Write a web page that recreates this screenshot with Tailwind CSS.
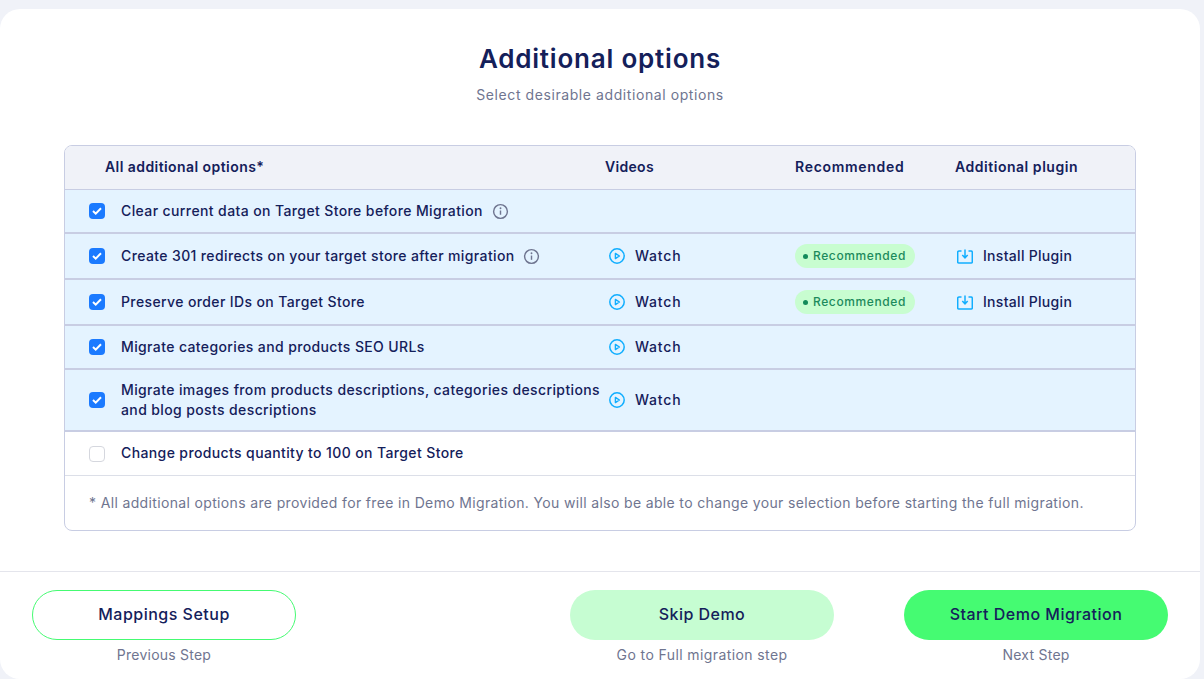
<!DOCTYPE html>
<html lang="en">
<head>
  <meta charset="UTF-8" />
  <title>Additional options</title>
  <script src="https://cdn.jsdelivr.net/npm/@tailwindcss/browser@4"></script>
</head>
<body class="h-[679px] overflow-hidden bg-[#f0f2f8] font-['Inter',sans-serif] text-[#14205a]">
  <div class="mt-[9px] mr-[4px] h-[670px] rounded-[20px] bg-white">
    <div class="pt-[32px] text-center">
      <h1 class="text-[26px] leading-[36px] font-semibold tracking-[0.8px]">Additional options</h1>
      <p class="mt-[8px] text-[14px] leading-[20px] tracking-[0.58px] text-[#6f7590]">Select desirable additional options</p>
    </div>

    <div class="mx-[64px] mt-[40px] h-[386px] overflow-hidden rounded-[8px] border border-[#c8cde3]">
      <div class="flex h-[44px] items-center border-b border-[#c8cde3] bg-[#f0f2f8] pb-[2px] text-[14px] font-semibold tracking-[0.43px]">
        <div class="w-[540px] pl-[40px]">All additional options*</div>
        <div class="w-[190px] tracking-[0.3px]">Videos</div>
        <div class="w-[160px] tracking-[0.7px]">Recommended</div>
        <div class="tracking-[0.53px]">Additional plugin</div>
      </div>

      <div class="flex h-[44px] items-center border-b-2 border-[#c8cde3] bg-[#e4f3ff] text-[14px] font-medium tracking-[0.39px]">
        <div class="flex w-[540px] items-center gap-[16px] pl-[24px]">
          <span class="flex h-[16px] w-[16px] items-center justify-center rounded-[4px] bg-[#1b7aff]"><svg width="10" height="8" viewBox="0 0 10 8" fill="none"><path d="M1 4l2.7 2.6L9 1.2" stroke="#fff" stroke-width="2"/></svg></span>
          <span class="pb-[2px]">Clear current data on Target Store before Migration</span>
          <svg class="-ml-[7px]" width="17" height="17" viewBox="0 0 18 18" fill="none"><circle cx="9" cy="9" r="7.3" stroke="#6f7590" stroke-width="1.5"/><path d="M9 8v4.500" stroke="#6f7590" stroke-width="1.5"/><circle cx="9" cy="5.600" r="1" fill="#6f7590"/></svg>
        </div>
      </div>

      <div class="flex h-[46px] items-center border-b-2 border-[#c8cde3] bg-[#e4f3ff] text-[14px] font-medium tracking-[0.38px]">
        <div class="flex w-[540px] items-center gap-[16px] pl-[24px]">
          <span class="flex h-[16px] w-[16px] items-center justify-center rounded-[4px] bg-[#1b7aff]"><svg width="10" height="8" viewBox="0 0 10 8" fill="none"><path d="M1 4l2.7 2.6L9 1.2" stroke="#fff" stroke-width="2"/></svg></span>
          <span class="pb-[2px]">Create 301 redirects on your target store after migration</span>
          <svg class="-ml-[8px]" width="17" height="17" viewBox="0 0 18 18" fill="none"><circle cx="9" cy="9" r="7.3" stroke="#6f7590" stroke-width="1.5"/><path d="M9 8v4.500" stroke="#6f7590" stroke-width="1.5"/><circle cx="9" cy="5.600" r="1" fill="#6f7590"/></svg>
        </div>
        <div class="flex w-[190px] items-center gap-[10px] pl-[4px]">
          <svg width="16" height="16" viewBox="0 0 16 16" fill="none"><circle cx="8" cy="8" r="7.2" stroke="#10aeff" stroke-width="1.5"/><path d="M6.4 5.4l4 2.6-4 2.6z" stroke="#10aeff" stroke-width="1.4" stroke-linejoin="round"/></svg>
          <span class="pb-[2px] tracking-[0.8px]">Watch</span>
        </div>
        <div class="flex w-[160px] items-center">
          <span class="inline-flex h-[24px] w-[120px] items-center gap-[5px] rounded-full bg-[#c8fdd0] pl-[8px] text-[12px] tracking-[0.6px] text-[#1c8a5c]"><span class="h-[5px] w-[5px] rounded-full bg-[#138a5a]"></span>Recommended</span>
        </div>
        <div class="flex items-center gap-[10px] pl-[2px]">
          <svg width="16" height="15" viewBox="0 0 16 15" fill="none"><path d="M4.500 2H2A1.300 1.300 0 0 0 .7 3.300v9.500A1.300 1.300 0 0 0 2 14.100h12a1.300 1.300 0 0 0 1.300-1.300V3.300A1.300 1.300 0 0 0 14 2h-2.500" stroke="#10aeff" stroke-width="1.5"/><path d="M8 .5v8M5.300 6L8 8.800 10.700 6" stroke="#10aeff" stroke-width="1.5"/></svg>
          <span class="pb-[2px] tracking-[0.3px]">Install Plugin</span>
        </div>
      </div>

      <div class="flex h-[46px] items-center border-b-2 border-[#c8cde3] bg-[#e4f3ff] text-[14px] font-medium tracking-[0.38px]">
        <div class="flex w-[540px] items-center gap-[16px] pl-[24px]">
          <span class="flex h-[16px] w-[16px] items-center justify-center rounded-[4px] bg-[#1b7aff]"><svg width="10" height="8" viewBox="0 0 10 8" fill="none"><path d="M1 4l2.7 2.6L9 1.2" stroke="#fff" stroke-width="2"/></svg></span>
          <span class="pb-[2px]">Preserve order IDs on Target Store</span>
        </div>
        <div class="flex w-[190px] items-center gap-[10px] pl-[4px]">
          <svg width="16" height="16" viewBox="0 0 16 16" fill="none"><circle cx="8" cy="8" r="7.2" stroke="#10aeff" stroke-width="1.5"/><path d="M6.4 5.4l4 2.6-4 2.6z" stroke="#10aeff" stroke-width="1.4" stroke-linejoin="round"/></svg>
          <span class="pb-[2px] tracking-[0.8px]">Watch</span>
        </div>
        <div class="flex w-[160px] items-center">
          <span class="inline-flex h-[24px] w-[120px] items-center gap-[5px] rounded-full bg-[#c8fdd0] pl-[8px] text-[12px] tracking-[0.6px] text-[#1c8a5c]"><span class="h-[5px] w-[5px] rounded-full bg-[#138a5a]"></span>Recommended</span>
        </div>
        <div class="flex items-center gap-[10px] pl-[2px]">
          <svg width="16" height="15" viewBox="0 0 16 15" fill="none"><path d="M4.500 2H2A1.300 1.300 0 0 0 .7 3.300v9.500A1.300 1.300 0 0 0 2 14.100h12a1.300 1.300 0 0 0 1.300-1.300V3.300A1.300 1.300 0 0 0 14 2h-2.500" stroke="#10aeff" stroke-width="1.5"/><path d="M8 .5v8M5.300 6L8 8.800 10.700 6" stroke="#10aeff" stroke-width="1.5"/></svg>
          <span class="pb-[2px] tracking-[0.3px]">Install Plugin</span>
        </div>
      </div>

      <div class="flex h-[44px] items-center border-b-2 border-[#c8cde3] bg-[#e4f3ff] text-[14px] font-medium tracking-[0.38px]">
        <div class="flex w-[540px] items-center gap-[16px] pl-[24px]">
          <span class="flex h-[16px] w-[16px] items-center justify-center rounded-[4px] bg-[#1b7aff]"><svg width="10" height="8" viewBox="0 0 10 8" fill="none"><path d="M1 4l2.7 2.6L9 1.2" stroke="#fff" stroke-width="2"/></svg></span>
          <span class="pb-[1px]">Migrate categories and products SEO URLs</span>
        </div>
        <div class="flex w-[190px] items-center gap-[10px] pl-[4px]">
          <svg width="16" height="16" viewBox="0 0 16 16" fill="none"><circle cx="8" cy="8" r="7.2" stroke="#10aeff" stroke-width="1.5"/><path d="M6.4 5.4l4 2.6-4 2.6z" stroke="#10aeff" stroke-width="1.4" stroke-linejoin="round"/></svg>
          <span class="pb-[2px] tracking-[0.8px]">Watch</span>
        </div>
      </div>

      <div class="flex h-[62px] items-center border-b-2 border-[#c8cde3] bg-[#e4f3ff] text-[14px] font-medium tracking-[0.38px]">
        <div class="flex w-[540px] items-center gap-[16px] pl-[24px]">
          <span class="flex h-[16px] w-[16px] shrink-0 items-center justify-center rounded-[4px] bg-[#1b7aff]"><svg width="10" height="8" viewBox="0 0 10 8" fill="none"><path d="M1 4l2.7 2.6L9 1.2" stroke="#fff" stroke-width="2"/></svg></span>
          <span class="leading-[20px]">Migrate images from products descriptions, categories descriptions and blog posts descriptions</span>
        </div>
        <div class="flex w-[190px] items-center gap-[10px] pl-[4px]">
          <svg width="16" height="16" viewBox="0 0 16 16" fill="none"><circle cx="8" cy="8" r="7.2" stroke="#10aeff" stroke-width="1.5"/><path d="M6.4 5.4l4 2.6-4 2.6z" stroke="#10aeff" stroke-width="1.4" stroke-linejoin="round"/></svg>
          <span class="pb-[2px] tracking-[0.8px]">Watch</span>
        </div>
      </div>

      <div class="flex h-[44px] items-center border-b border-[#dcdfe8] text-[14px] font-medium tracking-[0.38px]">
        <div class="flex w-[540px] items-center gap-[16px] pl-[24px]">
          <span class="h-[16px] w-[16px] rounded-[4px] border border-[#d5d7de]"></span>
          <span class="pb-[2px]">Change products quantity to 100 on Target Store</span>
        </div>
      </div>

      <p class="px-[24px] pt-[17px] text-[14px] leading-[20px] tracking-[0.35px] whitespace-nowrap text-[#6f7590]">* All additional options are provided for free in Demo Migration. You will also be able to change your selection before starting the full migration.</p>
    </div>

    <div class="mt-[40px] flex border-t border-[#e4e5ec] px-[32px] pt-[18px]">
      <div class="w-[264px] text-center">
        <div class="flex h-[50px] items-center justify-center rounded-full border border-[#45fb72] pb-[2px] text-[16px] font-medium tracking-[0.5px]">Mappings Setup</div>
        <p class="mt-[5px] text-[14px] leading-[20px] tracking-[0.23px] text-[#6f7590]">Previous Step</p>
      </div>
      <div class="ml-[274px] w-[264px] text-center">
        <div class="flex h-[50px] items-center justify-center rounded-full bg-[#c6fdd2] pb-[2px] text-[16px] font-medium tracking-[0.45px]">Skip Demo</div>
        <p class="mt-[5px] text-[14px] leading-[20px] tracking-[0.4px] text-[#6f7590]">Go to Full migration step</p>
      </div>
      <div class="ml-[70px] w-[264px] text-center">
        <div class="flex h-[50px] items-center justify-center rounded-full bg-[#45fb72] pb-[2px] text-[16px] font-medium tracking-[0.5px]">Start Demo Migration</div>
        <p class="mt-[5px] text-[14px] leading-[20px] tracking-[0.25px] text-[#6f7590]">Next Step</p>
      </div>
    </div>
  </div>
</body>
</html>
